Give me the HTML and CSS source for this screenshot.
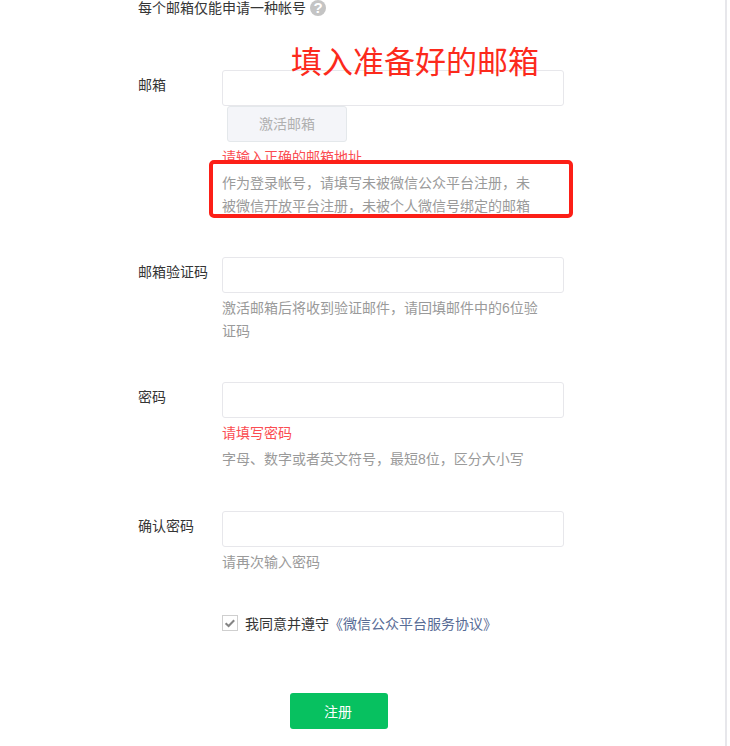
FILE: index.html
```html
<!DOCTYPE html>
<html lang="zh">
<head>
<meta charset="utf-8">
<title>注册</title>
<link rel="stylesheet" href="styles.css">
</head>
<body>
<main class="page">
  <p class="intro">每个邮箱仅能申请一种帐号 <span class="help">?</span></p>
  <form class="form">
    <div class="row">
      <label class="label">邮箱</label>
      <div class="field">
        <input class="input" type="text">
        <button class="activate" type="button">激活邮箱</button>
        <p class="error error-first">请输入正确的邮箱地址</p>
        <p class="tip">作为登录帐号，请填写未被微信公众平台注册，未被微信开放平台注册，未被个人微信号绑定的邮箱</p>
      </div>
    </div>
    <div class="row">
      <label class="label">邮箱验证码</label>
      <div class="field">
        <input class="input" type="text">
        <p class="tip tip-gap">激活邮箱后将收到验证邮件，请回填邮件中的6位验证码</p>
      </div>
    </div>
    <div class="row row-third">
      <label class="label">密码</label>
      <div class="field">
        <input class="input" type="password">
        <p class="error">请填写密码</p>
        <p class="tip">字母、数字或者英文符号，最短8位，区分大小写</p>
      </div>
    </div>
    <div class="row row-last">
      <label class="label">确认密码</label>
      <div class="field">
        <input class="input" type="password">
        <p class="tip tip-gap">请再次输入密码</p>
      </div>
    </div>
    <div class="agree">
      <span class="check">
        <svg viewBox="0 0 16 16" width="16" height="16"><path d="M3.6 8.2 6.6 11 12.2 5.2" fill="none" stroke="#858585" stroke-width="2"/></svg>
      </span>
      <span>我同意并遵守<a class="link">《微信公众平台服务协议》</a></span>
    </div>
    <button class="submit" type="button">注册</button>
  </form>
  <div class="note">填入准备好的邮箱</div>
  <div class="highlight"></div>
</main>
</body>
</html>
```

FILE: styles.css
```css
* { box-sizing: border-box; }
html, body { margin: 0; padding: 0; background: #fff; }
body {
  font-family: "Liberation Sans", "Noto Sans CJK SC", sans-serif;
  font-size: 14px;
  color: #353535;
  overflow: hidden;
}
.page {
  position: relative;
  width: 727px;
  height: 746px;
  padding-left: 138px;
  border-right: 2px solid #e7e7eb;
  overflow: hidden;
}
.intro {
  margin: 0;
  height: 70px;
  line-height: 16px;
  display: flex;
  align-items: flex-start;
  gap: 4px;
}
.help {
  width: 16px;
  height: 16px;
  border-radius: 50%;
  background: #c4c4c4;
  color: #fff;
  font-size: 15px;
  font-weight: bold;
  line-height: 16px;
  text-align: center;
}
.row { display: flex; margin-bottom: 39px; }
.row-third { margin-bottom: 40px; }
.row-last { margin-bottom: 0; }
.label { width: 84px; flex: none; line-height: 30px; }
.field { width: 342px; }
.input {
  display: block;
  width: 342px;
  height: 36px;
  border: 1px solid #e7e7eb;
  border-radius: 3px;
  background: #fff;
  outline: none;
}
.activate {
  display: block;
  width: 120px;
  height: 36px;
  margin-left: 5px;
  padding: 0 0 2px;
  border: 1px solid #e4e8eb;
  border-radius: 3px;
  background: #f4f5f9;
  color: #b0b0b0;
  font: inherit;
}
.error {
  margin: 4px 0 3px;
  line-height: 23px;
  color: #fb4d52;
}
.error-first { height: 23px; }
.tip { margin: 0; width: 320px; line-height: 23px; color: #9a9a9a; }
.tip-gap { margin-top: 4px; }
.agree {
  display: flex;
  align-items: center;
  gap: 7px;
  height: 16px;
  margin: 41px 0 0 84px;
}
.check {
  width: 16px;
  height: 16px;
  border: 1px solid #cfcfcf;
  background: #fff;
  display: flex;
  align-items: center;
  justify-content: center;
  flex: none;
}
.check svg { flex: none; }
.link { color: #576b95; }
.submit {
  display: block;
  width: 98px;
  height: 36px;
  margin: 62px 0 0 152px;
  padding: 0 2px 0 0;
  border: 0;
  border-radius: 3px;
  background: #07c160;
  color: #fff;
  font: inherit;
  font-size: 14px;
}
.note {
  position: absolute;
  left: 291px;
  top: 43px;
  font-size: 31px;
  line-height: 40px;
  color: #fc2a1c;
  white-space: nowrap;
}
.highlight {
  position: absolute;
  left: 209px;
  top: 160px;
  width: 364px;
  height: 58px;
  border: 4px solid #fc1f17;
  border-radius: 5px;
}
```
